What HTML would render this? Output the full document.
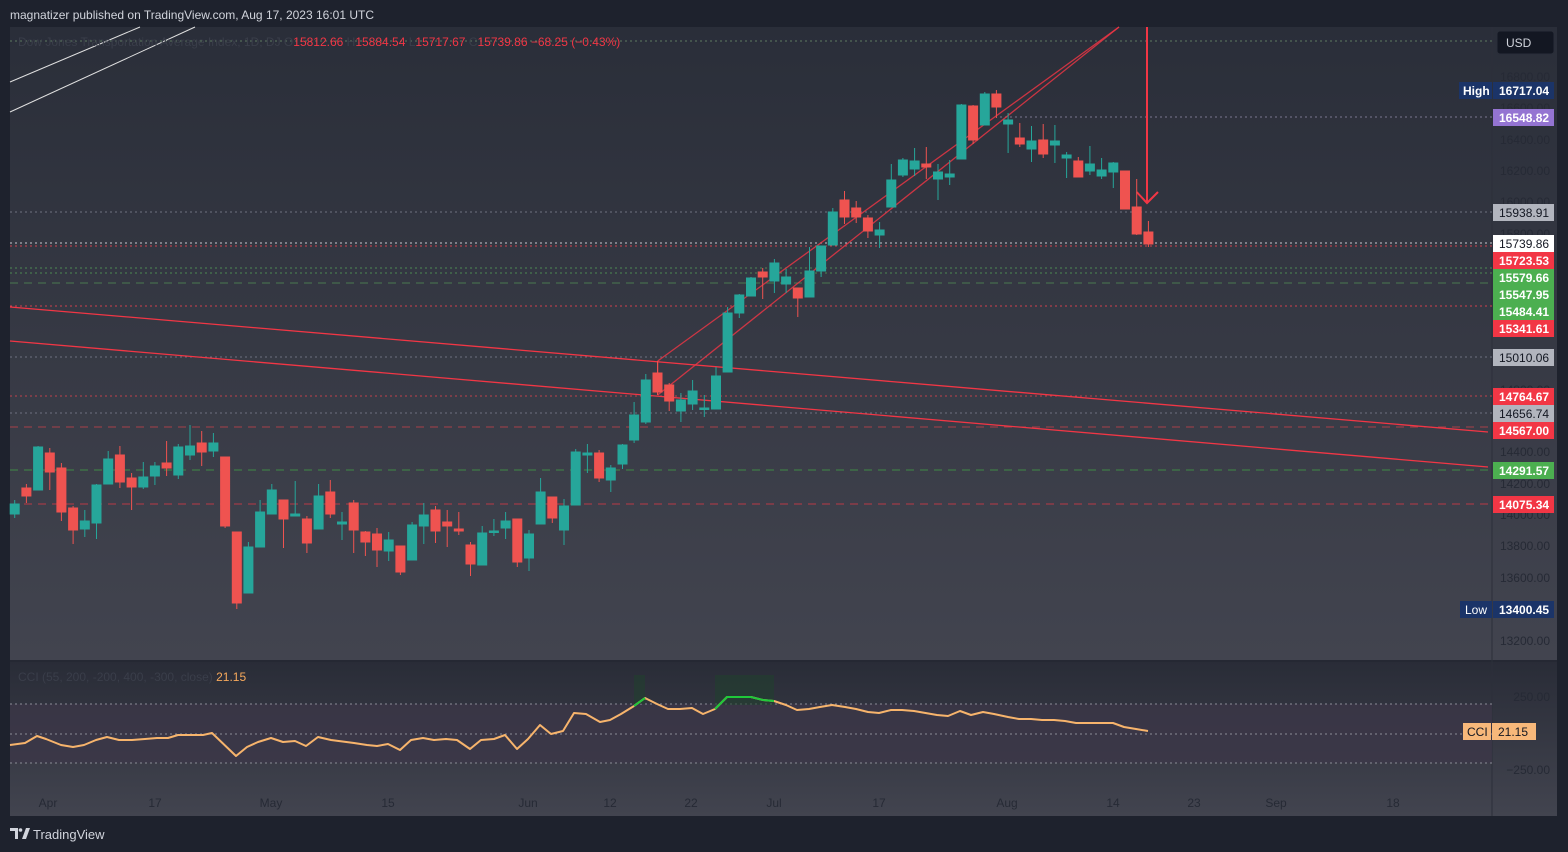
<!DOCTYPE html>
<html><head><meta charset="utf-8"><style>
html,body{margin:0;padding:0;background:#1e222d;width:1568px;height:852px;overflow:hidden}
svg{display:block;font-family:"Liberation Sans",sans-serif}
.g{fill:#26a69a;stroke:#26a69a}.r{fill:#ef5350;stroke:#ef5350}
.ax{fill:#262a35;font-size:12px}
.lb{font-size:12px}
</style></head><body>
<svg width="1568" height="852" viewBox="0 0 1568 852" xmlns="http://www.w3.org/2000/svg">
<defs>
<linearGradient id="mg" x1="0" y1="0" x2="0" y2="1"><stop offset="0" stop-color="#2a2e39"/><stop offset="1" stop-color="#42444f"/></linearGradient>
<linearGradient id="cg" x1="0" y1="0" x2="0" y2="1"><stop offset="0" stop-color="#292c37"/><stop offset="1" stop-color="#42444f"/></linearGradient>
</defs>
<rect width="1568" height="852" fill="#1e222d"/>
<text x="10" y="19" fill="#d1d4dc" font-size="12">magnatizer published on TradingView.com, Aug 17, 2023 16:01 UTC</text>
<!-- main pane -->
<rect x="10" y="27" width="1547" height="633" fill="url(#mg)"/>
<rect x="10" y="661" width="1547" height="155" fill="url(#cg)"/>
<rect x="10" y="660" width="1547" height="2" fill="#252833"/>
<line x1="1492" y1="27" x2="1492" y2="816" stroke="#2c2f3a" stroke-width="1"/>
<rect x="10" y="704" width="1482" height="59" fill="#3c3748" opacity="0.75"/>
<!-- horizontal levels -->
<g fill="none" stroke-width="1">
<line x1="10" y1="41" x2="1492" y2="41" stroke="#5d7a60" stroke-dasharray="2,3"/>
<line x1="1000" y1="117" x2="1492" y2="117" stroke="#7a7790" stroke-dasharray="2,3"/>
<line x1="10" y1="212" x2="1492" y2="212" stroke="#6e7180" stroke-dasharray="2,3"/>
<line x1="10" y1="243" x2="1492" y2="243" stroke="#c8c8d0" stroke-dasharray="2,3"/>
<line x1="10" y1="246" x2="1492" y2="246" stroke="#d0414e" stroke-dasharray="2,3"/>
<line x1="10" y1="268" x2="1492" y2="268" stroke="#4d8a52" stroke-dasharray="2,3"/>
<line x1="10" y1="273" x2="1492" y2="273" stroke="#4d8a52" stroke-dasharray="2,3"/>
<line x1="10" y1="283" x2="1492" y2="283" stroke="#4a7a50" stroke-dasharray="8,6"/>
<line x1="10" y1="306" x2="1492" y2="306" stroke="#d0414e" stroke-dasharray="2,3"/>
<line x1="10" y1="357" x2="1492" y2="357" stroke="#6e7180" stroke-dasharray="2,3"/>
<line x1="10" y1="396" x2="1492" y2="396" stroke="#c0404c" stroke-dasharray="2,3"/>
<line x1="10" y1="413" x2="1492" y2="413" stroke="#6e7180" stroke-dasharray="2,3"/>
<line x1="10" y1="427" x2="1492" y2="427" stroke="#a8404a" stroke-dasharray="8,6"/>
<line x1="10" y1="470" x2="1492" y2="470" stroke="#3f8a46" stroke-dasharray="8,6"/>
<line x1="10" y1="504" x2="1492" y2="504" stroke="#b83a46" stroke-dasharray="8,6"/>
<line x1="10" y1="704" x2="1492" y2="704" stroke="#8a8c96" stroke-dasharray="2,3"/>
<line x1="10" y1="734" x2="1492" y2="734" stroke="#8a8c96" stroke-dasharray="2,3"/>
<line x1="10" y1="763" x2="1492" y2="763" stroke="#8a8c96" stroke-dasharray="2,3"/>
</g>
<!-- white trend lines -->
<line x1="10" y1="82" x2="140" y2="27" stroke="#e0e0e0" stroke-width="1"/>
<line x1="10" y1="112" x2="195" y2="27" stroke="#e0e0e0" stroke-width="1"/>
<!-- red trend lines -->
<g stroke="#f23645" stroke-width="1.3" fill="none">
<line x1="10" y1="307" x2="1488" y2="432"/>
<line x1="10" y1="341" x2="1488" y2="467"/>
<line x1="657.7" y1="361" x2="1119" y2="27" opacity="0.8"/>
<line x1="657.7" y1="395" x2="1119" y2="27" opacity="0.8"/>
<line x1="657.7" y1="361" x2="657.7" y2="395" opacity="0.8"/>
<line x1="1147" y1="27" x2="1147" y2="203" stroke-width="2"/>
<polyline points="1136.7,192 1147,203 1158,192" stroke-width="2"/>
</g>
<!-- candles -->
<g stroke-width="1">
<line class="g" x1="14.7" y1="500" x2="14.7" y2="518"/><rect class="g" x="10.2" y="504" width="9" height="10"/>
<line class="r" x1="26.4" y1="484" x2="26.4" y2="503"/><rect class="r" x="21.9" y="488" width="9" height="8"/>
<line class="g" x1="38.1" y1="446" x2="38.1" y2="490"/><rect class="g" x="33.6" y="447" width="9" height="43"/>
<line class="r" x1="49.8" y1="448" x2="49.8" y2="490"/><rect class="r" x="45.3" y="453" width="9" height="19"/>
<line class="r" x1="61.4" y1="463" x2="61.4" y2="521"/><rect class="r" x="56.9" y="468" width="9" height="44"/>
<line class="r" x1="73.1" y1="506" x2="73.1" y2="544"/><rect class="r" x="68.6" y="508" width="9" height="22"/>
<line class="g" x1="84.8" y1="510" x2="84.8" y2="537"/><rect class="g" x="80.3" y="521" width="9" height="8"/>
<line class="g" x1="96.5" y1="484" x2="96.5" y2="539"/><rect class="g" x="92" y="485" width="9" height="38"/>
<line class="g" x1="108.2" y1="451" x2="108.2" y2="484"/><rect class="g" x="103.7" y="459" width="9" height="25"/>
<line class="r" x1="119.9" y1="446" x2="119.9" y2="488"/><rect class="r" x="115.4" y="455" width="9" height="27"/>
<line class="r" x1="131.6" y1="473" x2="131.6" y2="510"/><rect class="r" x="127.1" y="478" width="9" height="9"/>
<line class="g" x1="143.3" y1="462" x2="143.3" y2="489"/><rect class="g" x="138.8" y="477" width="9" height="10"/>
<line class="g" x1="154.9" y1="462" x2="154.9" y2="485"/><rect class="g" x="150.4" y="466" width="9" height="10"/>
<line class="r" x1="166.6" y1="441" x2="166.6" y2="476"/><rect class="r" x="162.1" y="463" width="9" height="5"/>
<line class="g" x1="178.3" y1="444" x2="178.3" y2="479"/><rect class="g" x="173.8" y="447" width="9" height="28"/>
<line class="g" x1="190" y1="425" x2="190" y2="460"/><rect class="g" x="185.5" y="446" width="9" height="9"/>
<line class="r" x1="201.7" y1="431" x2="201.7" y2="466"/><rect class="r" x="197.2" y="443" width="9" height="9"/>
<line class="g" x1="213.4" y1="433" x2="213.4" y2="457"/><rect class="g" x="208.9" y="443" width="9" height="8"/>
<line class="r" x1="225.1" y1="457" x2="225.1" y2="528"/><rect class="r" x="220.6" y="457" width="9" height="69"/>
<line class="r" x1="236.8" y1="532" x2="236.8" y2="609"/><rect class="r" x="232.3" y="532" width="9" height="71"/>
<line class="g" x1="248.4" y1="542" x2="248.4" y2="593"/><rect class="g" x="243.9" y="547" width="9" height="46"/>
<line class="g" x1="260.1" y1="500" x2="260.1" y2="547"/><rect class="g" x="255.6" y="512" width="9" height="35"/>
<line class="g" x1="271.8" y1="484" x2="271.8" y2="514"/><rect class="g" x="267.3" y="490" width="9" height="24"/>
<line class="r" x1="283.5" y1="500" x2="283.5" y2="548"/><rect class="r" x="279" y="500" width="9" height="19"/>
<line class="g" x1="295.2" y1="481" x2="295.2" y2="516"/><rect class="g" x="290.7" y="514" width="9" height="2"/>
<line class="r" x1="306.9" y1="516" x2="306.9" y2="553"/><rect class="r" x="302.4" y="519" width="9" height="24"/>
<line class="g" x1="318.6" y1="484" x2="318.6" y2="529"/><rect class="g" x="314.1" y="496" width="9" height="33"/>
<line class="r" x1="330.3" y1="480" x2="330.3" y2="518"/><rect class="r" x="325.8" y="492" width="9" height="22"/>
<line class="g" x1="342" y1="512" x2="342" y2="540"/><rect class="g" x="337.5" y="522" width="9" height="2"/>
<line class="r" x1="353.7" y1="500" x2="353.7" y2="553"/><rect class="r" x="349.2" y="503" width="9" height="27"/>
<line class="r" x1="365.4" y1="531" x2="365.4" y2="556"/><rect class="r" x="360.9" y="532" width="9" height="10"/>
<line class="r" x1="377" y1="528" x2="377" y2="567"/><rect class="r" x="372.5" y="534" width="9" height="16"/>
<line class="g" x1="388.7" y1="532" x2="388.7" y2="561"/><rect class="g" x="384.2" y="540" width="9" height="11"/>
<line class="r" x1="400.4" y1="546" x2="400.4" y2="575"/><rect class="r" x="395.9" y="546" width="9" height="26"/>
<line class="g" x1="412.1" y1="522" x2="412.1" y2="560"/><rect class="g" x="407.6" y="525" width="9" height="35"/>
<line class="g" x1="423.8" y1="503" x2="423.8" y2="544"/><rect class="g" x="419.3" y="515" width="9" height="11"/>
<line class="r" x1="435.5" y1="506" x2="435.5" y2="543"/><rect class="r" x="431" y="510" width="9" height="21"/>
<line class="r" x1="447.2" y1="510" x2="447.2" y2="547"/><rect class="r" x="442.7" y="522" width="9" height="4"/>
<line class="r" x1="458.8" y1="512" x2="458.8" y2="535"/><rect class="r" x="454.3" y="529" width="9" height="2"/>
<line class="r" x1="470.5" y1="542" x2="470.5" y2="576"/><rect class="r" x="466" y="545" width="9" height="19"/>
<line class="g" x1="482.2" y1="526" x2="482.2" y2="565"/><rect class="g" x="477.7" y="533" width="9" height="32"/>
<line class="g" x1="493.9" y1="519" x2="493.9" y2="536"/><rect class="g" x="489.4" y="531" width="9" height="1.5"/>
<line class="g" x1="505.6" y1="512" x2="505.6" y2="539"/><rect class="g" x="501.1" y="521" width="9" height="7"/>
<line class="r" x1="517.3" y1="519" x2="517.3" y2="567"/><rect class="r" x="512.8" y="519" width="9" height="43"/>
<line class="g" x1="529" y1="530" x2="529" y2="571"/><rect class="g" x="524.5" y="534" width="9" height="24"/>
<line class="g" x1="540.6" y1="478" x2="540.6" y2="524"/><rect class="g" x="536.1" y="492" width="9" height="32"/>
<line class="r" x1="552.3" y1="497" x2="552.3" y2="523"/><rect class="r" x="547.8" y="497" width="9" height="21"/>
<line class="g" x1="564" y1="499" x2="564" y2="545"/><rect class="g" x="559.5" y="506" width="9" height="24"/>
<line class="g" x1="575.7" y1="449" x2="575.7" y2="505"/><rect class="g" x="571.2" y="452" width="9" height="53"/>
<line class="g" x1="587.4" y1="444" x2="587.4" y2="473"/><rect class="g" x="582.9" y="453" width="9" height="2"/>
<line class="r" x1="599.1" y1="450" x2="599.1" y2="482"/><rect class="r" x="594.6" y="453" width="9" height="25"/>
<line class="g" x1="610.8" y1="465" x2="610.8" y2="492"/><rect class="g" x="606.3" y="468" width="9" height="12"/>
<line class="g" x1="622.5" y1="444" x2="622.5" y2="469"/><rect class="g" x="618" y="445" width="9" height="19"/>
<line class="g" x1="634.1" y1="402" x2="634.1" y2="443"/><rect class="g" x="629.6" y="415" width="9" height="25"/>
<line class="g" x1="645.8" y1="374" x2="645.8" y2="424"/><rect class="g" x="641.3" y="380" width="9" height="42"/>
<line class="r" x1="657.5" y1="361" x2="657.5" y2="395"/><rect class="r" x="653" y="373" width="9" height="19"/>
<line class="r" x1="669.2" y1="383" x2="669.2" y2="411"/><rect class="r" x="664.7" y="385" width="9" height="16"/>
<line class="g" x1="680.9" y1="393" x2="680.9" y2="422"/><rect class="g" x="676.4" y="400" width="9" height="11"/>
<line class="g" x1="692.6" y1="380" x2="692.6" y2="410"/><rect class="g" x="688.1" y="391" width="9" height="13"/>
<line class="g" x1="704.3" y1="395" x2="704.3" y2="417"/><rect class="g" x="699.8" y="408" width="9" height="1.5"/>
<line class="g" x1="716" y1="367" x2="716" y2="409"/><rect class="g" x="711.5" y="376" width="9" height="33"/>
<line class="g" x1="727.6" y1="307" x2="727.6" y2="372"/><rect class="g" x="723.1" y="313" width="9" height="59"/>
<line class="g" x1="739.3" y1="294" x2="739.3" y2="318"/><rect class="g" x="734.8" y="295" width="9" height="18"/>
<line class="g" x1="751" y1="277" x2="751" y2="296"/><rect class="g" x="746.5" y="278" width="9" height="18"/>
<line class="r" x1="762.7" y1="268" x2="762.7" y2="299"/><rect class="r" x="758.2" y="272" width="9" height="5"/>
<line class="g" x1="774.4" y1="259" x2="774.4" y2="293"/><rect class="g" x="769.9" y="263" width="9" height="18"/>
<line class="g" x1="786.1" y1="269" x2="786.1" y2="293"/><rect class="g" x="781.6" y="277" width="9" height="7"/>
<line class="r" x1="797.8" y1="288" x2="797.8" y2="317"/><rect class="r" x="793.3" y="288" width="9" height="10"/>
<line class="g" x1="809.5" y1="247" x2="809.5" y2="297"/><rect class="g" x="805" y="271" width="9" height="26"/>
<line class="g" x1="821.1" y1="246" x2="821.1" y2="277"/><rect class="g" x="816.6" y="246" width="9" height="25"/>
<line class="g" x1="832.8" y1="208" x2="832.8" y2="245"/><rect class="g" x="828.3" y="212" width="9" height="33"/>
<line class="r" x1="844.5" y1="191" x2="844.5" y2="224"/><rect class="r" x="840" y="200" width="9" height="17"/>
<line class="r" x1="856.2" y1="201" x2="856.2" y2="223"/><rect class="r" x="851.7" y="208" width="9" height="9"/>
<line class="r" x1="867.9" y1="215" x2="867.9" y2="238"/><rect class="r" x="863.4" y="218" width="9" height="13"/>
<line class="g" x1="879.6" y1="222" x2="879.6" y2="248"/><rect class="g" x="875.1" y="230" width="9" height="5"/>
<line class="g" x1="891.3" y1="164" x2="891.3" y2="207"/><rect class="g" x="886.8" y="180" width="9" height="27"/>
<line class="g" x1="902.9" y1="158" x2="902.9" y2="177"/><rect class="g" x="898.4" y="160" width="9" height="15"/>
<line class="g" x1="914.6" y1="148" x2="914.6" y2="176"/><rect class="g" x="910.1" y="161" width="9" height="8"/>
<line class="r" x1="926.3" y1="147" x2="926.3" y2="179"/><rect class="r" x="921.8" y="164" width="9" height="3"/>
<line class="g" x1="938" y1="164" x2="938" y2="200"/><rect class="g" x="933.5" y="172" width="9" height="7"/>
<line class="g" x1="949.7" y1="160" x2="949.7" y2="185"/><rect class="g" x="945.2" y="174" width="9" height="3"/>
<line class="g" x1="961.4" y1="104" x2="961.4" y2="159"/><rect class="g" x="956.9" y="105" width="9" height="54"/>
<line class="r" x1="973.1" y1="105" x2="973.1" y2="144"/><rect class="r" x="968.6" y="106" width="9" height="34"/>
<line class="g" x1="984.8" y1="92" x2="984.8" y2="125"/><rect class="g" x="980.3" y="94" width="9" height="31"/>
<line class="r" x1="996.4" y1="90" x2="996.4" y2="118"/><rect class="r" x="991.9" y="94" width="9" height="13"/>
<line class="g" x1="1008.1" y1="113" x2="1008.1" y2="153"/><rect class="g" x="1003.6" y="120" width="9" height="4"/>
<line class="r" x1="1019.8" y1="123" x2="1019.8" y2="147"/><rect class="r" x="1015.3" y="138" width="9" height="6"/>
<line class="g" x1="1031.5" y1="126" x2="1031.5" y2="162"/><rect class="g" x="1027" y="141" width="9" height="8"/>
<line class="r" x1="1043.2" y1="124" x2="1043.2" y2="158"/><rect class="r" x="1038.7" y="140" width="9" height="14"/>
<line class="g" x1="1054.9" y1="125" x2="1054.9" y2="163"/><rect class="g" x="1050.4" y="141" width="9" height="4"/>
<line class="g" x1="1066.6" y1="152" x2="1066.6" y2="178"/><rect class="g" x="1062.1" y="155" width="9" height="3"/>
<line class="r" x1="1078.3" y1="157" x2="1078.3" y2="177"/><rect class="r" x="1073.8" y="161" width="9" height="16"/>
<line class="g" x1="1089.9" y1="146" x2="1089.9" y2="175"/><rect class="g" x="1085.4" y="164" width="9" height="7"/>
<line class="g" x1="1101.6" y1="158" x2="1101.6" y2="179"/><rect class="g" x="1097.1" y="170" width="9" height="6"/>
<line class="g" x1="1113.3" y1="162" x2="1113.3" y2="188"/><rect class="g" x="1108.8" y="163" width="9" height="9"/>
<line class="r" x1="1125" y1="171" x2="1125" y2="209"/><rect class="r" x="1120.5" y="171" width="9" height="38"/>
<line class="r" x1="1136.7" y1="179" x2="1136.7" y2="235"/><rect class="r" x="1132.2" y="207" width="9" height="27"/>
<line class="r" x1="1148.4" y1="221" x2="1148.4" y2="247"/><rect class="r" x="1143.9" y="232" width="9" height="12"/>
</g>
<!-- legend -->
<text x="18" y="46" font-size="12"><tspan fill="#3a3e4a">Dow Jones Transportation Average Index, 1D, DJ  O</tspan><tspan fill="#f23645">15812.66</tspan><tspan fill="#3a3e4a">  H</tspan><tspan fill="#f23645">15884.54</tspan><tspan fill="#3a3e4a">  L</tspan><tspan fill="#f23645">15717.67</tspan><tspan fill="#3a3e4a">  C</tspan><tspan fill="#f23645">15739.86</tspan><tspan fill="#f23645">  −68.25 (−0.43%)</tspan></text>
<!-- price axis -->
<g class="ax" text-anchor="end">
<text x="1550" y="81">16800.00</text><text x="1550" y="112">16600.00</text><text x="1550" y="144">16400.00</text><text x="1550" y="175">16200.00</text><text x="1550" y="206">16000.00</text><text x="1550" y="238">15800.00</text><text x="1550" y="394">14800.00</text><text x="1550" y="456">14400.00</text><text x="1550" y="488">14200.00</text><text x="1550" y="519">14000.00</text><text x="1550" y="550">13800.00</text><text x="1550" y="582">13600.00</text><text x="1550" y="645">13200.00</text>
<text x="1550" y="701">250.00</text><text x="1550" y="774">−250.00</text>
</g>
<rect x="1497" y="31" width="57" height="23" rx="3" fill="#131722" stroke="#2a2e39"/>
<text x="1506" y="47" fill="#d1d4dc" font-size="12">USD</text>
<g class="lb" font-weight="bold">
<rect x="1459" y="82" width="33" height="17" fill="#1b3468"/><text x="1463" y="95" fill="#fff">High</text>
<rect x="1493" y="82" width="61" height="17" fill="#1b3468"/><text x="1499" y="95" fill="#fff">16717.04</text>
<rect x="1493" y="109" width="61" height="17" fill="#9474d2"/><text x="1499" y="122" fill="#fff">16548.82</text>
<rect x="1493" y="204" width="61" height="17" fill="#b2b5be"/><text x="1499" y="217" fill="#131722" font-weight="normal">15938.91</text>
<rect x="1493" y="235" width="61" height="17" fill="#ffffff"/><text x="1499" y="248" fill="#131722" font-weight="normal">15739.86</text>
<rect x="1493" y="252" width="61" height="17" fill="#f23645"/><text x="1499" y="265" fill="#fff">15723.53</text>
<rect x="1493" y="269" width="61" height="17" fill="#4caf50"/><text x="1499" y="282" fill="#fff">15579.66</text>
<rect x="1493" y="286" width="61" height="17" fill="#4caf50"/><text x="1499" y="299" fill="#fff">15547.95</text>
<rect x="1493" y="303" width="61" height="17" fill="#4caf50"/><text x="1499" y="316" fill="#fff">15484.41</text>
<rect x="1493" y="320" width="61" height="17" fill="#f23645"/><text x="1499" y="333" fill="#fff">15341.61</text>
<rect x="1493" y="349" width="61" height="17" fill="#b2b5be"/><text x="1499" y="362" fill="#131722" font-weight="normal">15010.06</text>
<rect x="1493" y="388" width="61" height="17" fill="#f23645"/><text x="1499" y="401" fill="#fff">14764.67</text>
<rect x="1493" y="405" width="61" height="17" fill="#b2b5be"/><text x="1499" y="418" fill="#131722" font-weight="normal">14656.74</text>
<rect x="1493" y="422" width="61" height="17" fill="#f23645"/><text x="1499" y="435" fill="#fff">14567.00</text>
<rect x="1493" y="462" width="61" height="17" fill="#4caf50"/><text x="1499" y="475" fill="#fff">14291.57</text>
<rect x="1493" y="496" width="61" height="17" fill="#f23645"/><text x="1499" y="509" fill="#fff">14075.34</text>
<rect x="1460" y="601" width="32" height="17" fill="#1b3468"/><text x="1465" y="614" fill="#fff" font-weight="normal">Low</text>
<rect x="1493" y="601" width="61" height="17" fill="#1b3468"/><text x="1499" y="614" fill="#fff">13400.45</text>
</g>
<!-- CCI -->
<text x="18" y="681" font-size="12"><tspan fill="#3a3e4a">CCI (55, 200, -200, 400, -300, close)  </tspan><tspan fill="#f7a95c">21.15</tspan></text>
<rect x="634" y="675" width="11" height="29" fill="#22402f" opacity="0.6"/>
<rect x="715" y="675" width="59" height="30" fill="#22402f" opacity="0.6"/>
<polyline fill="none" stroke="#f7b46c" stroke-width="2" stroke-linejoin="round" points="10,745 25,743 37,736 46,739 61,745 73,747 84,745 96,740 107,737 119,740 132,740 145,739 157,738 168,738 178,735 203,735 212,733 236,756 247,747 258,742 271,738 283,742 295,741 306,746 318,737 331,740 354,743 367,745 377,746 388,744 400,750 411,740 423,738 434,740 446,739 457,740 470,749 481,740 494,739 505,735 517,749 528,739 540,725 551,734 563,731 574,713 586,714 600,722 610,720 621,714 634,706 645,698 657,704 668,709 680,709 692,708 703,714 715,709 727,697 751,697 763,700 774,701 786,705 797,710 809,709 820,707 832,705 845,707 856,709 868,712 879,713 891,710 902,710 914,711 937,715 948,716 960,711 971,715 983,712 994,714 1008,717 1019,719 1031,719 1042,720 1054,720 1065,721 1076,723 1088,723 1113,723 1124,727 1136,729 1148,731"/>
<polyline fill="none" stroke="#1fc93a" stroke-width="2" points="634,706 645,698"/>
<polyline fill="none" stroke="#1fc93a" stroke-width="2" points="715,709 727,697 751,697 763,700 774,701"/>
<rect x="1463" y="723" width="28" height="17" fill="#f7b87a"/><text x="1467" y="736" fill="#131722" font-size="12">CCI</text>
<rect x="1492" y="723" width="44" height="17" fill="#f7b87a"/><text x="1498" y="736" fill="#131722" font-size="12">21.15</text>
<!-- time axis -->
<g class="ax" text-anchor="middle">
<text x="48" y="807">Apr</text><text x="155" y="807">17</text><text x="271" y="807">May</text><text x="388" y="807">15</text><text x="528" y="807">Jun</text><text x="610" y="807">12</text><text x="691" y="807">22</text><text x="774" y="807">Jul</text><text x="879" y="807">17</text><text x="1007" y="807">Aug</text><text x="1113" y="807">14</text><text x="1194" y="807">23</text><text x="1276" y="807">Sep</text><text x="1393" y="807">18</text>
</g>
<!-- footer logo -->
<g fill="#d1d4dc">
<path d="M10 828h8v11h-3v-8h-5z"/><circle cx="20.5" cy="830" r="1.8"/><path d="M22 839l4-11h4l-4 11z"/>
</g>
<text x="33" y="839" fill="#d1d4dc" font-size="13">TradingView</text>
</svg>
</body></html>
